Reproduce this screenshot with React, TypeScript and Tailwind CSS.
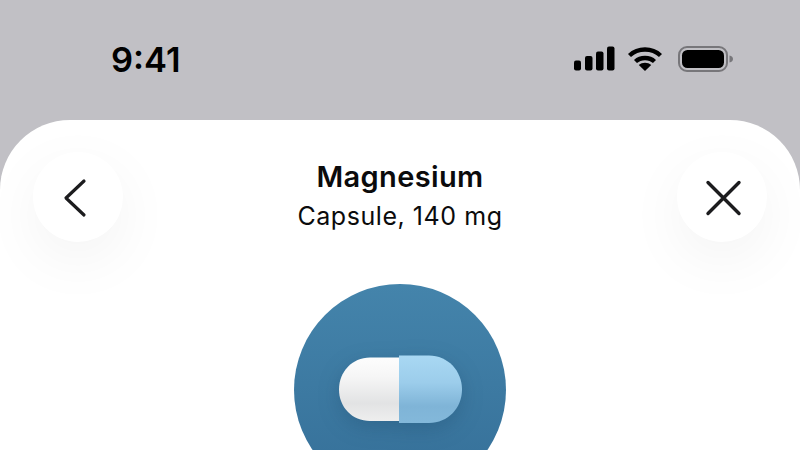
import React from 'react';

const StatusIcons: React.FC = () => (
    <div className="flex items-center">
        <svg width="42" height="26" viewBox="0 0 42 26" className="mr-[12px]" fill="#000">
            <rect x="1" y="14.5" width="7" height="10" rx="2" />
            <rect x="12" y="10" width="7.5" height="14.5" rx="2" />
            <rect x="23" y="5.5" width="7.5" height="19" rx="2" />
            <rect x="34" y="0.5" width="7.5" height="24" rx="2" />
        </svg>
        <svg width="36" height="26" viewBox="0 0 36 26" className="mr-[15px]" fill="none" stroke="#000" strokeWidth="4.4">
            <path d="M2.5 9.5C11 1.5 25 1.5 33.5 9.5" />
            <path d="M8.5 15.5C13.5 10.8 22.5 10.8 27.5 15.5" />
            <path d="M18 25L11.8 19C15.2 16 20.8 16 24.2 19Z" fill="#000" stroke="none" />
        </svg>
        <svg width="56" height="26" viewBox="0 0 56 26">
            <rect x="1" y="1" width="48" height="24" rx="8" fill="none" stroke="#77767a" strokeWidth="2" />
            <rect x="4" y="4" width="42" height="18" rx="5.5" fill="#000" />
            <path d="M51.5 9.5C53.8 10 55 11.3 55 13C55 14.7 53.8 16 51.5 16.5Z" fill="#77767a" />
        </svg>
    </div>
);

const RoundButton: React.FC<{ children: React.ReactNode }> = ({ children }) => (
    <button className="w-[90px] h-[90px] rounded-full bg-white flex items-center justify-center shadow-[0_18px_60px_rgba(0,0,0,0.05)]">
        {children}
    </button>
);

const Pill: React.FC = () => (
    <svg width="124" height="72" viewBox="0 0 124 72">
        <defs>
            <linearGradient id="pillWhite" x1="0" y1="0" x2="0" y2="1">
                <stop offset="0" stopColor="#fdfdfd" />
                <stop offset="0.3" stopColor="#f6f6f6" />
                <stop offset="0.72" stopColor="#e2e3e4" />
                <stop offset="1" stopColor="#eeeeee" />
            </linearGradient>
            <linearGradient id="pillBlue" x1="0" y1="0" x2="0" y2="1">
                <stop offset="0" stopColor="#a9d8f3" />
                <stop offset="0.4" stopColor="#9ccdeb" />
                <stop offset="0.75" stopColor="#7fb4d7" />
                <stop offset="1" stopColor="#83b8da" />
            </linearGradient>
        </defs>
        <path d="M61 3.5H31C13 3.5 0 18 0 35.500C0 53 13 67 31 67H61Z" fill="url(#pillWhite)" />
        <path d="M60 1.500H90C109 1.500 123 17 123 35.500C123 54 109 69 90 69H60Z" fill="url(#pillBlue)" />
    </svg>
);

const App: React.FC = () => {
    return (
        <div className="w-[800px] h-[450px] overflow-hidden flex flex-col bg-[#c1c0c5] font-['Inter',sans-serif] text-[#0b0b0c]">
            {/* Status bar */}
            <div className="h-[120px] shrink-0 flex items-start justify-between pt-[46px] pl-[111px] pr-[66px]">
                <span className="text-[34.5px] leading-[28px] font-semibold text-black">9:41</span>
                <StatusIcons />
            </div>

            {/* Sheet */}
            <div className="flex-1 bg-white rounded-t-[70px] pt-[32px] flex flex-col items-center overflow-hidden">
                <div className="w-full shrink-0 flex items-center justify-between pl-[33px] pr-[33px] h-[90px]">
                    <RoundButton>
                        <svg width="24" height="40" viewBox="0 0 24 40" className="mr-[6px] mt-[1px]" fill="none" stroke="#1c1c1e" strokeWidth="3.2" strokeLinecap="round" strokeLinejoin="round">
                            <path d="M21 3L3 20L21 37" />
                        </svg>
                    </RoundButton>
                    <div className="flex flex-col items-center">
                        <h1 className="text-[29px] leading-[36px] font-semibold tracking-[0.35px] -mt-[3px]">Magnesium</h1>
                        <p className="text-[25px] leading-[32px] tracking-[0.55px] mt-[5px]">Capsule, 140 mg</p>
                    </div>
                    <RoundButton>
                        <svg width="38" height="38" viewBox="0 0 38 38" className="ml-[1px] mt-[1px]" fill="none" stroke="#1c1c1e" strokeWidth="3.4" strokeLinecap="round">
                            <path d="M4 3.500L35 34.500M35 3.500L4 34.500" />
                        </svg>
                    </RoundButton>
                </div>

                {/* Pill badge */}
                <div className="mt-[42px] shrink-0 w-[212px] h-[212px] rounded-full bg-gradient-to-b from-[#4484ab] to-[#356f98] flex items-center justify-center">
                    <div className="ml-[1px] drop-shadow-[0_6px_10px_rgba(20,60,90,0.25)]">
                        <Pill />
                    </div>
                </div>
            </div>
        </div>
    );
};

export default App;
